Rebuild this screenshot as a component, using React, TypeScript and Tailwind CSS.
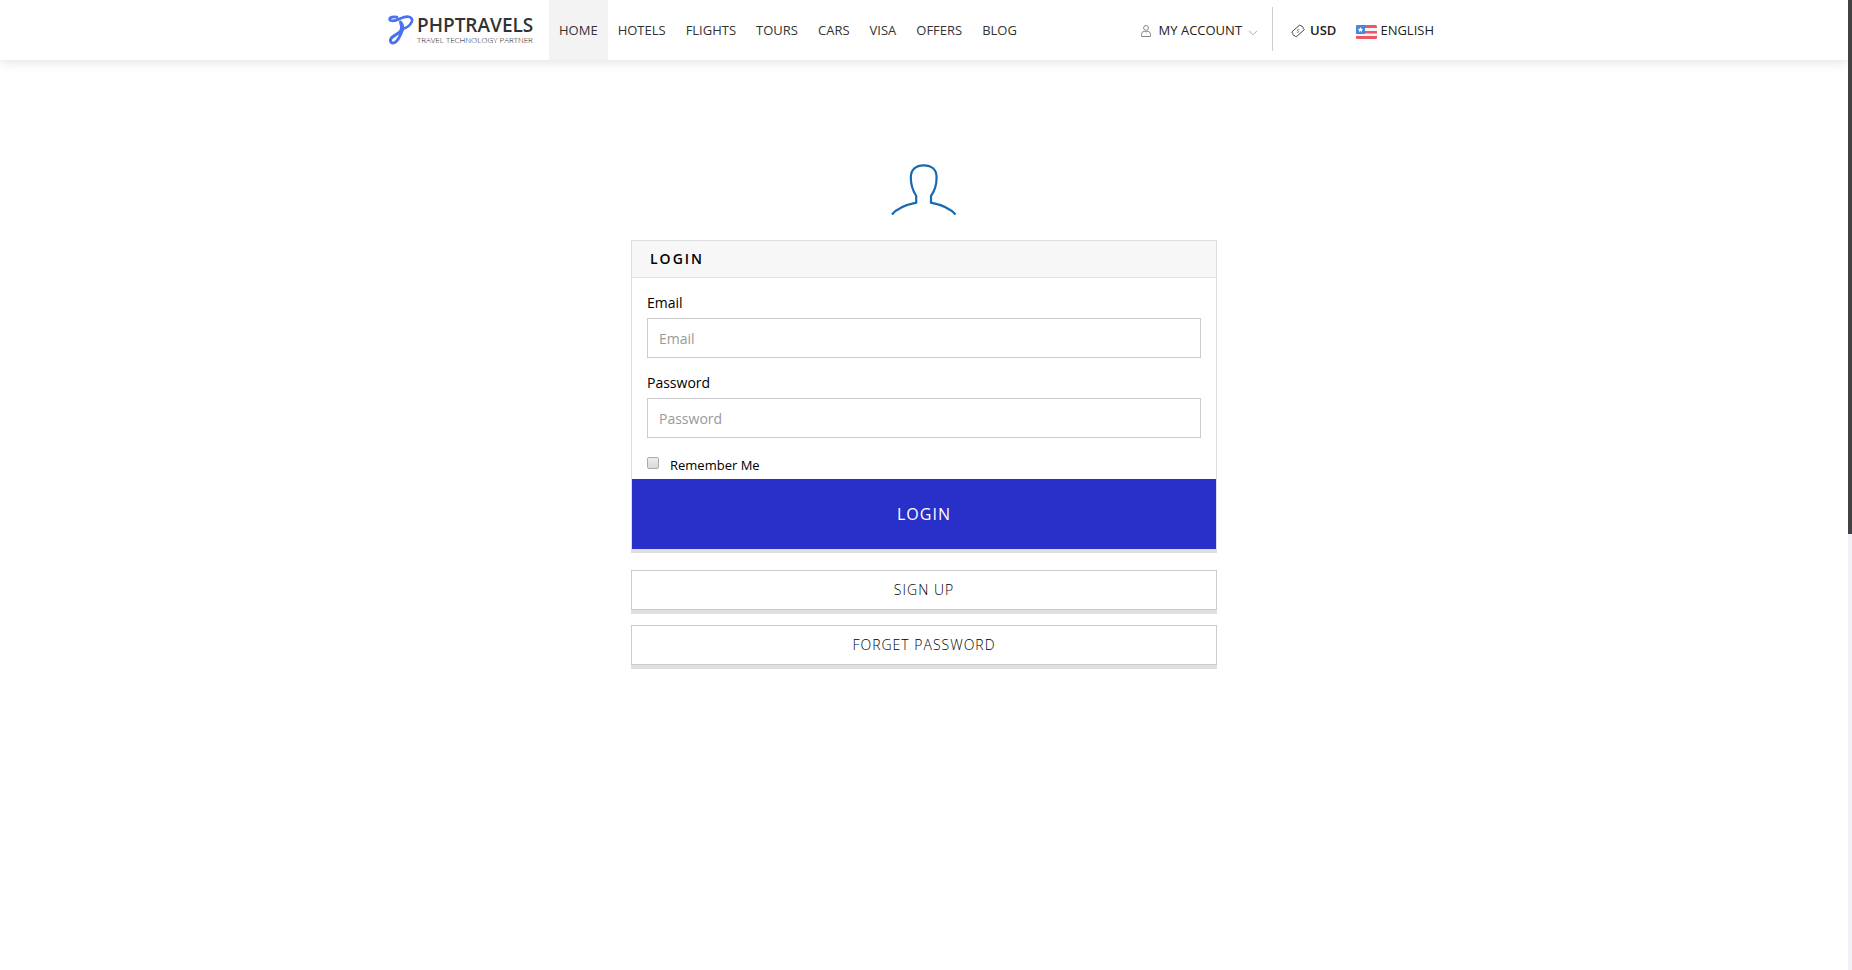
import { useState, type FormEvent } from "react";

const LINKS = ["HOME", "HOTELS", "FLIGHTS", "TOURS", "CARS", "VISA", "OFFERS", "BLOG"];

function Logo() {
  return (
    <a href="#home" className="flex h-[60px] w-[161px] items-center gap-[3px]">
      <svg viewBox="0 0 26 30" className="h-[30px] w-[26px] shrink-0" fill="none" stroke="#4a70f5" strokeLinecap="round" strokeLinejoin="round" aria-hidden="true">
        <path d="M9 2.100C5.500 1.300 1.700 2.200 1.600 4.200C1.700 6 5 6.300 8.500 5.100C12.500 3.500 16 1.500 19.500 1.600C23.500 1.800 25 4.300 23.500 7.300C22 10.500 18.500 13 14.500 14" strokeWidth="2.700" />
        <path d="M12.500 7C14.300 9.500 15 12 14.300 15C12.800 19.500 11 25 6.800 27.500C3.500 29 1.500 26.500 3 23.500C5 20 11 19.500 14 14.500" strokeWidth="3" />
        <path d="M13.500 9.500C14.700 12 14 15 12.300 18" strokeWidth="4" />
      </svg>
      <span className="flex flex-col whitespace-nowrap">
        <span className="text-[19px] font-semibold leading-5 text-[#333]">PHPTRAVELS</span>
        <span className="text-[8px] font-light leading-[10px] text-[#111]">TRAVEL TECHNOLOGY PARTNER</span>
      </span>
    </a>
  );
}

function UserIcon() {
  return (
    <svg viewBox="0 0 10 12" className="h-3 w-[10px]" fill="none" stroke="#888" aria-hidden="true">
      <circle cx="5" cy="2.900" r="2.400" />
      <path d="M.5 11.500V9.500Q.5 6.500 3.200 6.300Q5 7.500 6.800 6.300Q9.500 6.500 9.500 9.500V11.500Z" />
    </svg>
  );
}

function MoneyIcon() {
  return (
    <svg viewBox="0 0 14 14" className="h-[14px] w-[14px]" fill="none" stroke="#333" aria-hidden="true">
      <path d="M.7 8L8.800 .9L10 2.100L11 2L12.200 3.300L12.100 4.300L13.300 5.700L5.200 12.900L4 11.700L3 11.800L1.800 10.500L1.900 9.500Z" strokeWidth=".9" />
      <path d="M8.300 5.800Q7.200 5 6.500 5.700Q6.100 6.600 7 6.900Q8 7.200 7.500 8.100Q6.700 8.700 5.700 8" stroke="#777" strokeWidth=".9" />
    </svg>
  );
}

function Flag() {
  return (
    <svg viewBox="0 0 21 14" className="mt-[3px] h-[14px] w-[21px]" aria-hidden="true">
      <clipPath id="flag-edge"><rect width="21" height="14" rx="1.500" /></clipPath>
      <g clipPath="url(#flag-edge)">
        <rect width="21" height="14" fill="#f5f5f5" />
        <path d="M0 0H21V3H0ZM0 6H21V8.500H0ZM0 11H21V14H0Z" fill="#f05565" />
        <rect width="9" height="9" fill="#4a86dc" />
        <path d="M4.500 2L5.300 3.700L7.200 3.900L5.800 5.200L6.200 7L4.500 6.100L2.800 7L3.200 5.200L1.800 3.900L3.700 3.700Z" fill="#fff" />
      </g>
    </svg>
  );
}

function Header() {
  return (
    <header className="bg-white shadow-[0_0_12px_rgba(0,0,0,0.16)]">
      <div className="mx-auto flex max-w-[1072px] items-center justify-between">
        <div className="flex items-center">
          <Logo />
          <nav className="flex text-[13px] text-[#333]">
            {LINKS.map((name) => (
              <a
                key={name}
                href={`#${name.toLowerCase()}`}
                className={`flex h-[60px] items-center px-[10px] pt-px ${name === "HOME" ? "bg-[#f3f3f3]" : ""}`}
              >
                {name}
              </a>
            ))}
          </nav>
        </div>
        <div className="mr-4 flex items-center text-[13px] text-[#222]">
          <button type="button" className="flex items-center gap-2 pr-[14px] pt-px">
            <UserIcon />
            <span className="flex items-center gap-[6px]">
              MY ACCOUNT
              <svg viewBox="0 0 10 6" className="mt-1 h-[6px] w-[10px]" fill="none" stroke="#aaa" aria-hidden="true">
                <path d="M1 .8L5 4.800L9 .8" />
              </svg>
            </span>
          </button>
          <span className="mb-[2px] h-11 w-px bg-[#ccc]" />
          <button type="button" className="flex items-center gap-[5px] pl-[18px] pr-[10px] pt-px font-semibold">
            <MoneyIcon />
            USD
          </button>
          <button type="button" className="flex items-center gap-[3px] px-[10px] pt-px">
            <Flag />
            ENGLISH
          </button>
        </div>
      </div>
    </header>
  );
}

function Field({ id, type, label }: { id: string; type: string; label: string }) {
  return (
    <div className="flex flex-col gap-[5px]">
      <label htmlFor={id} className="text-sm leading-5 text-black">{label}</label>
      <input
        id={id}
        type={type}
        placeholder={label}
        className="h-10 w-full border border-[#ccc] px-[11px] text-sm text-[#333] placeholder:text-[#999]"
      />
    </div>
  );
}

export default function App() {
  const [remember, setRemember] = useState(false);
  const submit = (event: FormEvent) => event.preventDefault();
  const secondary =
    "flex h-10 items-center justify-center border border-[#ccc] text-sm font-light tracking-[1px] text-black shadow-[0_4px_0_#dfdfdf]";

  return (
    <div className="flex min-h-screen bg-white font-['Open_Sans','Noto_Sans',sans-serif]">
      <div className="min-w-0 flex-1">
        <Header />
        <main className="mx-auto flex max-w-[586px] flex-col pt-[104px]">
          <svg viewBox="0 0 66 52" className="mx-auto mb-6 h-[52px] w-[66px]" fill="none" stroke="#1769b5" strokeWidth="2.200" aria-hidden="true">
            <path d="M1 50.500C6.500 43.500 16 40.500 25.200 38.600V32C22 27 19.800 20.500 19.800 13.500C19.800 5.500 25 1.300 32.700 1.300C40.500 1.300 45.600 5.500 45.600 13.500C45.600 20.500 43.600 27 40 32V38.600C49.500 40.500 58.500 43.500 64.500 50.500" />
          </svg>
          <form onSubmit={submit} className="border border-[#ddd] shadow-[0_3px_0_#dfdfdf]">
            <h1 className="flex h-[37px] items-center border-b border-[#e3e3e3] bg-[#f7f7f7] px-[18px] text-sm font-semibold tracking-[2px] text-black">LOGIN</h1>
            <div className="flex flex-col gap-[15px] px-[15px] pt-[15px]">
              <Field id="email" type="email" label="Email" />
              <Field id="password" type="password" label="Password" />
              <label className="flex h-[26px] items-center gap-[11px] text-[13px] font-medium text-black">
                <input
                  type="checkbox"
                  checked={remember}
                  onChange={(event) => setRemember(event.target.checked)}
                  className="mb-[6px] h-3 w-3 appearance-none rounded-[2px] border border-[#aaa] bg-linear-to-b from-[#eee] to-[#d9d9d9] checked:bg-[#2930ca]"
                />
                Remember Me
              </label>
            </div>
            <button type="submit" className="h-[70px] w-full bg-[#2930ca] text-base font-medium tracking-[1px] text-white">LOGIN</button>
          </form>
          <nav className="flex flex-col gap-[15px] pt-5">
            <a href="#signup" className={secondary}>SIGN UP</a>
            <a href="#forget" className={secondary}>FORGET PASSWORD</a>
          </nav>
        </main>
      </div>
      <div className="w-1 bg-[#f1f1f8]" aria-hidden="true">
        <div className="h-[55vh] bg-[#424242]" />
      </div>
    </div>
  );
}
